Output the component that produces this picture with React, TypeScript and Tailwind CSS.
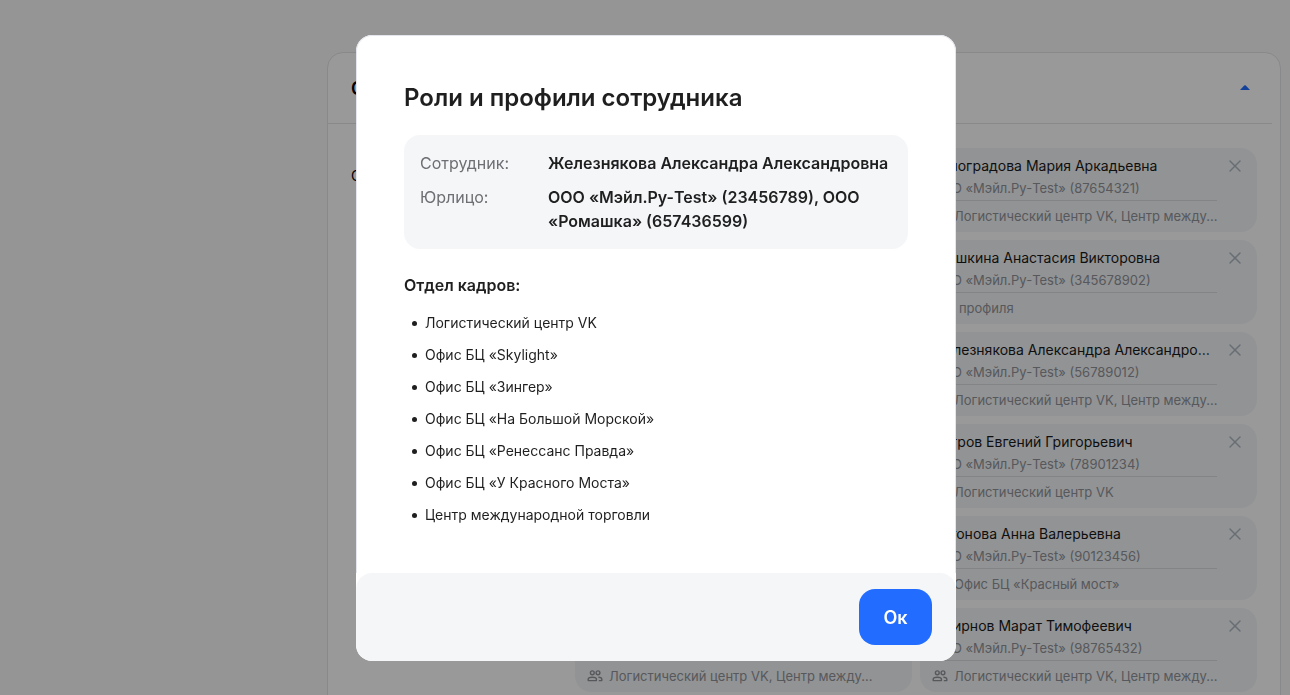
import { LuX } from "react-icons/lu";

type Employee = { name: string; company: string; profile?: string };

const logistics = "Логистический центр VK, Центр между...";

const people: Employee[] = [
  { name: "Белова Ольга Сергеевна", company: "ООО «Мэйл.Ру-Test» (12345678)", profile: logistics },
  { name: "Виноградова Мария Аркадьевна", company: "ООО «Мэйл.Ру-Test» (87654321)", profile: logistics },
  { name: "Волков Иван Петрович", company: "ООО «Мэйл.Ру-Test» (23456701)", profile: logistics },
  { name: "Глушкина Анастасия Викторовна", company: "ООО «Мэйл.Ру-Test» (345678902)" },
  { name: "Егоров Павел Ильич", company: "ООО «Мэйл.Ру-Test» (34567812)", profile: logistics },
  { name: "Железнякова Александра Александровна", company: "ООО «Мэйл.Ру-Test» (56789012)", profile: logistics },
  { name: "Зайцева Елена Юрьевна", company: "ООО «Мэйл.Ру-Test» (45678123)", profile: logistics },
  { name: "Петров Евгений Григорьевич", company: "ООО «Мэйл.Ру-Test» (78901234)", profile: "Логистический центр VK" },
  { name: "Попов Олег Игоревич", company: "ООО «Мэйл.Ру-Test» (56781234)", profile: logistics },
  { name: "Антонова Анна Валерьевна", company: "ООО «Мэйл.Ру-Test» (90123456)", profile: "Офис БЦ «Красный мост»" },
  { name: "Семёнов Артём Львович", company: "ООО «Мэйл.Ру-Test» (67812345)", profile: logistics },
  { name: "Смирнов Марат Тимофеевич", company: "ООО «Мэйл.Ру-Test» (98765432)", profile: logistics },
];

const offices = [
  "Логистический центр VK",
  "Офис БЦ «Skylight»",
  "Офис БЦ «Зингер»",
  "Офис БЦ «На Большой Морской»",
  "Офис БЦ «Ренессанс Правда»",
  "Офис БЦ «У Красного Моста»",
  "Центр международной торговли",
];

function PeopleIcon() {
  return (
    <svg className="h-4 w-4 shrink-0" viewBox="0 0 16 16" fill="none" stroke="currentColor" strokeWidth="1.4" aria-hidden="true">
      <circle cx="5.3" cy="4.8" r="1.9" />
      <circle cx="11" cy="4.8" r="1.9" />
      <path d="M1.2 12.6v-1.4c0-1.3 1.9-2 4.1-2s4.1.7 4.1 2v1.4z" strokeLinejoin="round" />
      <path d="M11.4 9.3c2 .1 3.4.8 3.4 1.9v1.4h-3" strokeLinejoin="round" />
    </svg>
  );
}

function EmployeeCard({ name, company, profile }: Employee) {
  return (
    <li className="flex h-[84px] gap-2 rounded-2xl bg-[#f4f6f8] px-3">
      <div className="min-w-0 flex-1">
        <div className="pb-1 pt-2">
          <p className="truncate text-sm leading-5 text-[#1a1a1a]">{name}</p>
          <p className="truncate pt-1 text-[13px] leading-4 text-[#919399]">{company}</p>
        </div>
        <div className="flex items-center gap-[6px] border-t border-[#dcdde1] pt-[6px] text-[#919399]">
          {profile && <PeopleIcon />}
          <p className="whitespace-nowrap text-[13px] leading-[18px]">{profile ?? "Нет профиля"}</p>
        </div>
      </div>
      <button type="button" aria-label="Удалить" className="mt-2 flex h-5 w-5 items-center justify-center text-[#aeb7c2]">
        <LuX size={20} strokeWidth={1.8} />
      </button>
    </li>
  );
}

function RolesDialog() {
  return (
    <div className="fixed inset-0 flex items-center justify-center bg-black/40 pl-[22px]">
      <section role="dialog" aria-modal="true" aria-labelledby="roles-title" className="w-full max-w-[600px] overflow-hidden rounded-2xl bg-white text-[#1f1f1f]">
        <div className="rounded-t-2xl border-x border-t border-[#e4e6ee] px-[47px] pb-[42px] pt-12">
          <h2 id="roles-title" className="text-2xl font-semibold leading-7">Роли и профили сотрудника</h2>
          <dl className="mt-[23px] grid grid-cols-[120px_1fr] gap-x-2 gap-y-[10px] rounded-2xl bg-[#f4f6f8] p-4 leading-6">
            <dt className="text-[#6d6f73]">Сотрудник:</dt>
            <dd className="font-semibold">Железнякова Александра Александровна</dd>
            <dt className="text-[#6d6f73]">Юрлицо:</dt>
            <dd className="font-semibold">ООО «Мэйл.Ру-Test» (23456789), ООО «Ромашка» (657436599)</dd>
          </dl>
          <h3 className="mt-6 font-semibold leading-6">Отдел кадров:</h3>
          <ul className="mt-[10px] flex flex-col">
            {offices.map((office) => (
              <li key={office} className="flex items-center gap-2 pl-2 text-sm leading-8">
                <span className="mt-0.5 h-[5px] w-[5px] rounded-full bg-[#1f1f1f]" />
                {office}
              </li>
            ))}
          </ul>
        </div>
        <footer className="flex justify-end rounded-2xl bg-[#f4f6f8] px-6 py-4">
          <button type="button" className="h-14 min-w-[73px] rounded-2xl bg-[#226dff] px-6 pt-0.5 text-lg font-semibold text-white">Ок</button>
        </footer>
      </section>
    </div>
  );
}

export default function App() {
  return (
    <div className="h-screen overflow-hidden bg-[#f9f9f9] font-['Inter','Liberation_Sans',sans-serif]">
      <main className="pl-[327px] pr-[9px] pt-[52px]">
        <section className="min-h-screen rounded-2xl border border-[#e3e4e8] bg-white">
          <header className="mr-2 flex h-[71px] items-center justify-between border-b border-[#e3e4e8] pl-[23px] pr-[15px]">
            <h1 className="pt-px text-lg font-semibold text-black">Сотрудники</h1>
            <button type="button" aria-label="Свернуть" className="flex h-6 w-6 items-center justify-center pb-px">
              <svg className="h-[5px] w-[10px]" viewBox="0 0 10 5" aria-hidden="true">
                <path d="M0 5 4.2.5Q5 0 5.8.5L10 5z" fill="#226dff" />
              </svg>
            </button>
          </header>
          <div className="flex px-[23px] pt-6">
            <h2 className="w-56 shrink-0 pt-[18px] text-sm leading-5">Список</h2>
            <ul className="grid min-w-0 flex-1 grid-cols-2 gap-2">
              {people.map((person) => (
                <EmployeeCard key={person.name} {...person} />
              ))}
            </ul>
          </div>
        </section>
      </main>
      <RolesDialog />
    </div>
  );
}
